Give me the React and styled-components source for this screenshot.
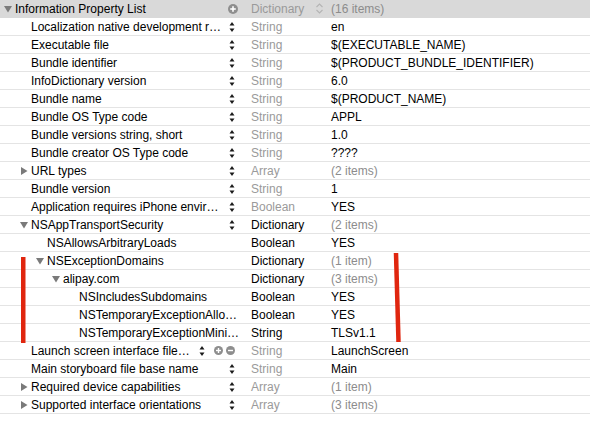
import React from 'react';
import styled, { createGlobalStyle } from 'styled-components';

const GlobalStyle = createGlobalStyle`
  html, body {
    margin: 0;
    padding: 0;
    background: #ffffff;
  }
  body {
    font-family: "Liberation Sans", Arial, sans-serif;
  }
`;

const rows = [
  { level: 1, key: 'Localization native development r…', controls: 'stepper', type: 'String', value: 'en' },
  { level: 1, key: 'Executable file', controls: 'stepper', type: 'String', value: '$(EXECUTABLE_NAME)' },
  { level: 1, key: 'Bundle identifier', controls: 'stepper', type: 'String', value: '$(PRODUCT_BUNDLE_IDENTIFIER)' },
  { level: 1, key: 'InfoDictionary version', controls: 'stepper', type: 'String', value: '6.0' },
  { level: 1, key: 'Bundle name', controls: 'stepper', type: 'String', value: '$(PRODUCT_NAME)' },
  { level: 1, key: 'Bundle OS Type code', controls: 'stepper', type: 'String', value: 'APPL' },
  { level: 1, key: 'Bundle versions string, short', controls: 'stepper', type: 'String', value: '1.0' },
  { level: 1, key: 'Bundle creator OS Type code', controls: 'stepper', type: 'String', value: '????' },
  { level: 1, key: 'URL types', toggle: 'closed', controls: 'stepper', type: 'Array', value: '(2 items)', count: true },
  { level: 1, key: 'Bundle version', controls: 'stepper', type: 'String', value: '1' },
  { level: 1, key: 'Application requires iPhone envir…', controls: 'stepper', type: 'Boolean', value: 'YES' },
  { level: 1, key: 'NSAppTransportSecurity', toggle: 'open', controls: 'stepper', type: 'Dictionary', dark: true, value: '(2 items)', count: true },
  { level: 2, key: 'NSAllowsArbitraryLoads', type: 'Boolean', dark: true, value: 'YES' },
  { level: 2, key: 'NSExceptionDomains', toggle: 'open', type: 'Dictionary', dark: true, value: '(1 item)', count: true },
  { level: 3, key: 'alipay.com', toggle: 'open', type: 'Dictionary', dark: true, value: '(3 items)', count: true },
  { level: 4, key: 'NSIncludesSubdomains', type: 'Boolean', dark: true, value: 'YES' },
  { level: 4, key: 'NSTemporaryExceptionAllo…', type: 'Boolean', dark: true, value: 'YES' },
  { level: 4, key: 'NSTemporaryExceptionMini…', type: 'String', dark: true, value: 'TLSv1.1' },
  { level: 1, key: 'Launch screen interface file…', controls: 'edit', type: 'String', value: 'LaunchScreen' },
  { level: 1, key: 'Main storyboard file base name', controls: 'stepper', type: 'String', value: 'Main' },
  { level: 1, key: 'Required device capabilities', toggle: 'closed', controls: 'stepper', type: 'Array', value: '(1 item)', count: true },
  { level: 1, key: 'Supported interface orientations', toggle: 'closed', controls: 'stepper', type: 'Array', value: '(3 items)', count: true },
];

const Triangle = ({ open }) => (
  <svg width="8" height="8" viewBox="0 0 8 8">
    {open ? (
      <polygon points="0,1 8,1 4,7.5" fill="#7a7a7a" />
    ) : (
      <polygon points="1,0 7.5,4 1,8" fill="#7a7a7a" />
    )}
  </svg>
);

const Stepper = () => (
  <svg width="6" height="12" viewBox="0 0 6 12">
    <polygon points="0.5,4.5 3,1 5.5,4.5" fill="#1a1a1a" />
    <polygon points="0.5,7.5 5.5,7.5 3,11" fill="#1a1a1a" />
  </svg>
);

const RoundButton = ({ minus, size = 9 }) => (
  <svg width={size} height={size} viewBox="0 0 9 9">
    <circle cx="4.5" cy="4.5" r="4.5" fill="#8e8e8e" />
    <rect x="2" y="3.8" width="5" height="1.4" fill="#ffffff" />
    {!minus && <rect x="3.8" y="2" width="1.4" height="5" fill="#ffffff" />}
  </svg>
);

const SortChevrons = () => (
  <svg width="9" height="13" viewBox="0 0 9 13">
    <polyline points="1.5,5 4.5,2 7.5,5" fill="none" stroke="#b4b4b4" strokeWidth="1.1" />
    <polyline points="1.5,8 4.5,11 7.5,8" fill="none" stroke="#b4b4b4" strokeWidth="1.1" />
  </svg>
);

const Controls = ({ kind }) => {
  if (kind === 'stepper') return <ControlGroup><Stepper /></ControlGroup>;
  if (kind === 'plus') return <ControlGroup $shift={3}><RoundButton size={10} /></ControlGroup>;
  if (kind === 'edit')
    return (
      <ControlGroup>
        <Stepper />
        <Spacer />
        <RoundButton />
        <RoundButton minus />
      </ControlGroup>
    );
  return null;
};

const Row = ({ row, header }) => (
  <RowBox $header={header}>
    <KeyCell $level={row.level}>
      <Toggle>{row.toggle && <Triangle open={row.toggle === 'open'} />}</Toggle>
      <KeyText>{row.key}</KeyText>
      <Controls kind={row.controls} />
    </KeyCell>
    <TypeCell $dark={row.dark}>
      <span>{row.type}</span>
      {header && <SortChevrons />}
    </TypeCell>
    <ValueCell $count={row.count}>{row.value}</ValueCell>
  </RowBox>
);

const App = () => (
  <>
    <GlobalStyle />
    <Editor>
      <Row
        header
        row={{ level: 0, key: 'Information Property List', toggle: 'open', controls: 'plus', type: 'Dictionary', value: '(16 items)', count: true }}
      />
      {rows.map((row, i) => (
        <Row key={i} row={row} />
      ))}
      <Markup width="590" height="432" viewBox="0 0 590 432">
        <rect x="21" y="257" width="4.5" height="86" fill="#e0260f" />
        <line x1="396" y1="253" x2="398.5" y2="342" stroke="#e0260f" strokeWidth="4.5" />
      </Markup>
    </Editor>
  </>
);

const Editor = styled.div`
  position: relative;
  width: 590px;
  height: 432px;
  overflow: hidden;
  background: #ffffff;
  font-size: 12px;
  color: #000000;
`;

const RowBox = styled.div`
  display: grid;
  grid-template-columns: 246px 80px 1fr;
  height: 18px;
  box-sizing: border-box;
  align-items: center;
  background: ${(p) => (p.$header ? '#d9d9d9' : '#ffffff')};
  border-bottom: 1px solid ${(p) => (p.$header ? '#d9d9d9' : '#e4e4e4')};
`;

const KeyCell = styled.div`
  display: flex;
  align-items: center;
  height: 100%;
  padding-left: ${(p) => 4 + p.$level * 16}px;
  padding-right: 11px;
  min-width: 0;
`;

const Toggle = styled.span`
  display: flex;
  align-items: center;
  width: 11px;
  flex: none;
`;

const KeyText = styled.span`
  flex: 1;
  white-space: nowrap;
`;

const ControlGroup = styled.span`
  display: flex;
  align-items: center;
  gap: 3px;
  flex: none;
  margin-left: 6px;
  margin-right: ${(p) => -(p.$shift || 0)}px;
`;

const Spacer = styled.span`
  width: 3px;
`;

const TypeCell = styled.div`
  display: flex;
  align-items: center;
  justify-content: space-between;
  padding: 0 2px 0 5px;
  color: ${(p) => (p.$dark ? '#000000' : '#9a9a9a')};
  white-space: nowrap;
`;

const ValueCell = styled.div`
  padding-left: 5px;
  color: ${(p) => (p.$count ? '#8c8c8c' : '#000000')};
  white-space: nowrap;
`;

const Markup = styled.svg`
  position: absolute;
  left: 0;
  top: 0;
  pointer-events: none;
`;

export default App;
